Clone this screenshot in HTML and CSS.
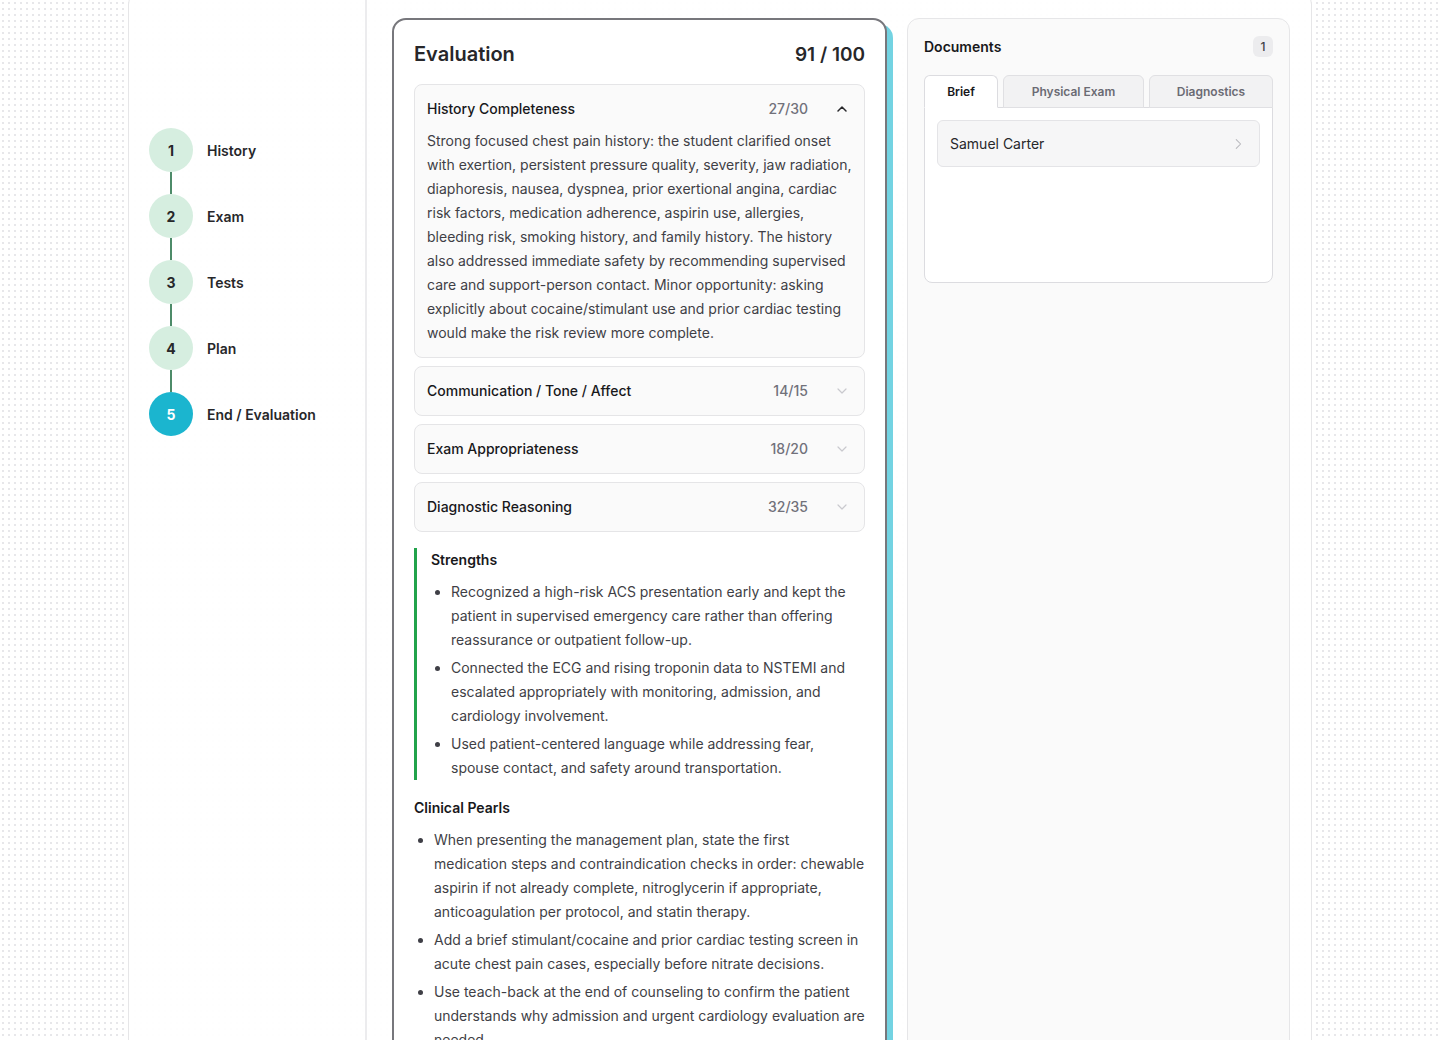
FILE: index.html
```html
<!DOCTYPE html>
<html>
<head>
    <meta charset="UTF-8">
    <meta name="viewport" content="width=device-width, initial-scale=1.0">
    <title>Case Evaluation</title>
    <link rel="stylesheet" href="styles.css">
</head>
<body>
    <div class="app">
        <!-- Case steps -->
        <aside class="steps">
            <div class="step done"><span class="step-num">1</span><span class="step-label">History</span></div>
            <div class="step-line"></div>
            <div class="step done"><span class="step-num">2</span><span class="step-label">Exam</span></div>
            <div class="step-line"></div>
            <div class="step done"><span class="step-num">3</span><span class="step-label">Tests</span></div>
            <div class="step-line"></div>
            <div class="step done"><span class="step-num">4</span><span class="step-label">Plan</span></div>
            <div class="step-line"></div>
            <div class="step active"><span class="step-num">5</span><span class="step-label">End / Evaluation</span></div>
        </aside>

        <main class="main">
            <section class="eval-card">
                <div class="eval-header">
                    <h1>Evaluation</h1>
                    <span class="eval-total">91 / 100</span>
                </div>

                <div class="acc-item open">
                    <div class="acc-head">
                        <span class="acc-title">History Completeness</span>
                        <span class="acc-score">27/30</span>
                        <svg class="chev" viewBox="0 0 16 16" width="16" height="16"><polyline points="4,10 8,6 12,10" fill="none" stroke="#27272a" stroke-width="1.5" stroke-linecap="round" stroke-linejoin="round"/></svg>
                    </div>
                    <p class="acc-body">Strong focused chest pain history: the student clarified onset with exertion, persistent pressure quality, severity, jaw radiation, diaphoresis, nausea, dyspnea, prior exertional angina, cardiac risk factors, medication adherence, aspirin use, allergies, bleeding risk, smoking history, and family history. The history also addressed immediate safety by recommending supervised care and support-person contact. Minor opportunity: asking explicitly about cocaine/stimulant use and prior cardiac testing would make the risk review more complete.</p>
                </div>

                <div class="acc-item">
                    <div class="acc-head">
                        <span class="acc-title">Communication / Tone / Affect</span>
                        <span class="acc-score">14/15</span>
                        <svg class="chev" viewBox="0 0 16 16" width="16" height="16"><polyline points="4,6 8,10 12,6" fill="none" stroke="#c9c9ce" stroke-width="1.2" stroke-linecap="round" stroke-linejoin="round"/></svg>
                    </div>
                </div>

                <div class="acc-item">
                    <div class="acc-head">
                        <span class="acc-title">Exam Appropriateness</span>
                        <span class="acc-score">18/20</span>
                        <svg class="chev" viewBox="0 0 16 16" width="16" height="16"><polyline points="4,6 8,10 12,6" fill="none" stroke="#c9c9ce" stroke-width="1.2" stroke-linecap="round" stroke-linejoin="round"/></svg>
                    </div>
                </div>

                <div class="acc-item">
                    <div class="acc-head">
                        <span class="acc-title">Diagnostic Reasoning</span>
                        <span class="acc-score">32/35</span>
                        <svg class="chev" viewBox="0 0 16 16" width="16" height="16"><polyline points="4,6 8,10 12,6" fill="none" stroke="#c9c9ce" stroke-width="1.2" stroke-linecap="round" stroke-linejoin="round"/></svg>
                    </div>
                </div>

                <div class="strengths">
                    <h3>Strengths</h3>
                    <ul>
                        <li>Recognized a high-risk ACS presentation early and kept the patient in supervised emergency care rather than offering reassurance or outpatient follow-up.</li>
                        <li>Connected the ECG and rising troponin data to NSTEMI and escalated appropriately with monitoring, admission, and cardiology involvement.</li>
                        <li>Used patient-centered language while addressing fear, spouse contact, and safety around transportation.</li>
                    </ul>
                </div>

                <div class="pearls">
                    <h3>Clinical Pearls</h3>
                    <ul>
                        <li>When presenting the management plan, state the first medication steps and contraindication checks in order: chewable aspirin if not already complete, nitroglycerin if appropriate, anticoagulation per protocol, and statin therapy.</li>
                        <li>Add a brief stimulant/cocaine and prior cardiac testing screen in acute chest pain cases, especially before nitrate decisions.</li>
                        <li>Use teach-back at the end of counseling to confirm the patient understands why admission and urgent cardiology evaluation are needed.</li>
                    </ul>
                </div>
            </section>

            <section class="docs">
                <div class="docs-header">
                    <h2>Documents</h2>
                    <span class="badge">1</span>
                </div>
                <div class="tabs">
                    <div class="tab tab-brief active">Brief</div>
                    <div class="tab tab-exam">Physical Exam</div>
                    <div class="tab tab-diag">Diagnostics</div>
                </div>
                <div class="tab-panel">
                    <div class="doc-row">
                        <span>Samuel Carter</span>
                        <svg viewBox="0 0 16 16" width="14" height="14"><polyline points="6,3 11,8 6,13" fill="none" stroke="#b8b8bd" stroke-width="1.2" stroke-linecap="round" stroke-linejoin="round"/></svg>
                    </div>
                </div>
            </section>
        </main>
    </div>
</body>
</html>
```

FILE: styles.css
```css
/* page */
body {
    margin: 0;
    font-family: Inter, "Noto Sans", sans-serif;
    color: #27272a;
    background-color: #fff;
    background-image: radial-gradient(#e7e7ea 0.8px, transparent 1px);
    background-size: 6px 6px;
}
.app {
    width: 1184px;
    box-sizing: border-box;
    margin: -10px auto 0;
    display: flex;
    background-color: rgba(255, 255, 255, 0.94);
    border: 1px solid #e6e6e8;
    border-radius: 14px;
    min-height: 1100px;
}

/* steps */
.steps {
    width: 238px;
    flex-shrink: 0;
    box-sizing: border-box;
    padding: 137px 0 0 20px;
    border-right: 2px solid #ececee;
}
.step {
    display: flex;
    align-items: center;
    height: 44px;
}
.step-num {
    width: 44px;
    height: 44px;
    border-radius: 50%;
    background-color: #d6eee0;
    color: #27272a;
    font-size: 14px;
    font-weight: 700;
    display: flex;
    align-items: center;
    justify-content: center;
}
.step.active .step-num {
    background-color: #1bb5cf;
    color: #fff;
}
.step-label {
    margin-left: 14px;
    font-size: 14px;
    font-weight: 600;
    color: #27272a;
}
.step-line {
    width: 2px;
    height: 22px;
    margin-left: 21px;
    background-color: #4d8b69;
}

/* main area */
.main {
    flex: 1;
    display: flex;
    align-items: stretch;
    gap: 20px;
    padding: 27px 21px 40px 25px;
}

/* evaluation card */
.eval-card {
    width: 495px;
    flex-shrink: 0;
    box-sizing: border-box;
    padding: 20px 20px 24px;
    background-color: #fff;
    border: 2px solid #77777c;
    border-radius: 14px;
    box-shadow: 6px 6px 0 #73d3e2;
}
.eval-header {
    display: flex;
    justify-content: space-between;
    align-items: center;
    height: 28px;
    margin-bottom: 16px;
}
.eval-header h1 {
    margin: 0;
    font-size: 20px;
    font-weight: 600;
    color: #27272a;
}
.eval-total {
    font-size: 19px;
    font-weight: 600;
    color: #27272a;
}
.acc-item {
    background-color: #fafafa;
    border: 1px solid #e5e5e7;
    border-radius: 8px;
    margin-bottom: 8px;
}
.acc-head {
    display: flex;
    align-items: center;
    padding: 14px 14px 14px 12px;
    line-height: 20px;
}
.acc-title {
    flex: 1;
    font-size: 14px;
    font-weight: 500;
    color: #18181b;
}
.acc-score {
    font-size: 14px;
    font-weight: 500;
    color: #71717a;
    margin-right: 26px;
}
.chev {
    display: block;
}
.acc-body {
    margin: -4px 0 0;
    padding: 0 12px 12px;
    font-size: 14px;
    line-height: 24px;
    color: #3f3f46;
}

/* strengths and pearls */
.strengths {
    margin-top: 16px;
    border-left: 3px solid #22a34b;
    padding-left: 14px;
}
.strengths h3,
.pearls h3 {
    margin: 0;
    font-size: 14px;
    font-weight: 600;
    line-height: 20px;
    color: #18181b;
}
.strengths h3 {
    padding-top: 2px;
}
.strengths ul,
.pearls ul {
    margin: 10px 0 0;
    padding-left: 20px;
    font-size: 14px;
    line-height: 24px;
    color: #3f3f46;
}
.strengths li + li,
.pearls li + li {
    margin-top: 4px;
}
.pearls {
    margin-top: 18px;
}

/* documents */
.docs {
    flex: 1;
    box-sizing: border-box;
    padding: 16px;
    background-color: #fafafa;
    border: 1px solid #e6e6e8;
    border-radius: 12px;
}
.docs-header {
    display: flex;
    justify-content: space-between;
    align-items: center;
    height: 22px;
}
.docs-header h2 {
    margin: 0;
    font-size: 14px;
    font-weight: 600;
    color: #18181b;
}
.badge {
    width: 20px;
    height: 21px;
    border-radius: 6px;
    background-color: #ececee;
    font-size: 12px;
    font-weight: 500;
    color: #3f3f46;
    display: flex;
    align-items: center;
    justify-content: center;
}
.tabs {
    display: flex;
    gap: 5px;
    margin-top: 18px;
}
.tab {
    box-sizing: border-box;
    height: 33px;
    margin-bottom: -1px;
    display: flex;
    align-items: center;
    justify-content: center;
    font-size: 12px;
    font-weight: 600;
    color: #6b6b73;
    background-color: #f2f2f3;
    border: 1px solid #e0e0e3;
    border-radius: 6px 6px 0 0;
}
.tab.active {
    color: #18181b;
    background-color: #fff;
    border-color: #dcdce0;
    border-bottom-color: #fff;
    position: relative;
}
.tab-brief {
    width: 74px;
}
.tab-exam {
    width: 141px;
}
.tab-diag {
    flex: 1;
}
.tab-panel {
    box-sizing: border-box;
    min-height: 176px;
    padding: 12px;
    background-color: #fff;
    border: 1px solid #dcdce0;
    border-radius: 0 0 8px 8px;
}
.doc-row {
    height: 47px;
    box-sizing: border-box;
    display: flex;
    align-items: center;
    justify-content: space-between;
    padding: 0 14px 0 12px;
    background-color: #f6f6f7;
    border: 1px solid #e4e4e7;
    border-radius: 6px;
    font-size: 14px;
    color: #27272a;
}
.doc-row svg {
    display: block;
}
```
